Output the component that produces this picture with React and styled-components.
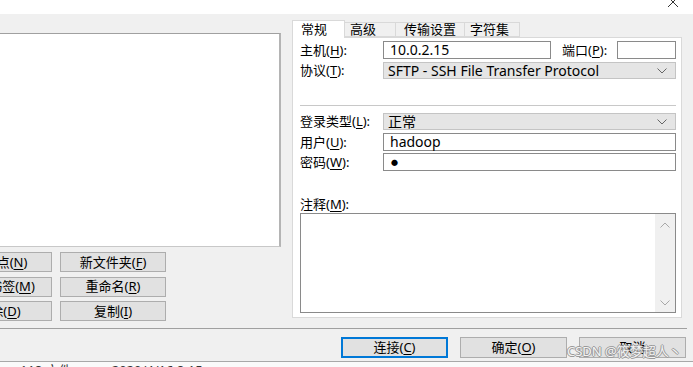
import React from "react";
import styled, { createGlobalStyle } from "styled-components";

const GlobalStyle = createGlobalStyle`
  html, body {
    margin: 0;
    padding: 0;
    width: 693px;
    height: 367px;
    overflow: hidden;
    background: #f0f0f0;
    font-family: "Noto Sans", "Noto Sans CJK SC", sans-serif;
    font-size: 13px;
    color: #000;
  }
  u { text-decoration-thickness: 1px; text-underline-offset: 2px; }
`;

const Window = styled.div`
  position: relative;
  width: 693px;
  height: 367px;
  overflow: hidden;
  display: flex;
  flex-direction: column;
`;

const TitleBar = styled.div`
  height: 14px;
  flex: none;
  background: #fff;
  display: flex;
  justify-content: flex-end;
  padding-right: 14px;
  overflow: hidden;
`;

const Main = styled.div`
  display: flex;
  align-items: flex-start;
  height: 304px;
  flex: none;
`;

const LeftPane = styled.div`
  margin-left: -60px;
  width: 341px;
  flex: none;
  display: flex;
  flex-direction: column;
`;

const ListBox = styled.div`
  margin-top: 19px;
  height: 214px;
  box-sizing: border-box;
  background: #fff;
  border-top: 1px solid #a0a0a0;
  border-right: 2px solid #b4b4b4;
  border-bottom: 1px solid #c8c8c8;
`;

const ButtonGrid = styled.div`
  margin-top: 5px;
  padding-left: 6px;
  display: grid;
  grid-template-columns: 106px 106px;
  grid-auto-rows: 20px;
  column-gap: 8px;
  row-gap: 4.5px;
`;

const Button = styled.div`
  box-sizing: border-box;
  width: ${p => p.$w || 106}px;
  height: ${p => p.$h || 20}px;
  background: #e1e1e1;
  border: 1px solid ${p => (p.$default ? "#0078d7" : "#adadad")};
  box-shadow: ${p => (p.$default ? "inset 0 0 0 1px #0078d7" : "none")};
  display: flex;
  align-items: center;
  justify-content: center;
  white-space: nowrap;
  font-size: 13px;
  line-height: 1;
`;

const RightPane = styled.div`
  margin-left: 11px;
  width: 390px;
  flex: none;
  display: flex;
  flex-direction: column;
`;

const TabBar = styled.div`
  margin-top: 6px;
  height: 17px;
  display: flex;
  align-items: flex-end;
  position: relative;
  z-index: 1;
`;

const Tab = styled.div`
  box-sizing: border-box;
  width: ${p => p.$w}px;
  height: ${p => (p.$active ? 18 : 15)}px;
  margin-bottom: ${p => (p.$active ? -1 : 0)}px;
  background: ${p => (p.$active ? "#fff" : "#f0f0f0")};
  border: 1px solid #d9d9d9;
  border-bottom: ${p => (p.$active ? "none" : "1px solid #d9d9d9")};
  border-left: ${p => (p.$first ? "1px solid #d9d9d9" : "none")};
  padding-left: ${p => p.$pad}px;
  display: flex;
  align-items: center;
  font-size: 13px;
  line-height: 1;
  white-space: nowrap;
`;

const TabPanel = styled.div`
  box-sizing: border-box;
  height: 281px;
  background: #fff;
  border: 1px solid #d9d9d9;
  padding: 0 5px 0 7px;
  display: flex;
  flex-direction: column;
`;

const Row = styled.div`
  display: flex;
  align-items: center;
  margin-top: ${p => p.$mt}px;
  height: ${p => p.$h || 18}px;
`;

const Label = styled.div`
  width: ${p => p.$w || 83}px;
  margin-left: ${p => p.$ml || 0}px;
  flex: none;
  white-space: nowrap;
  font-size: 13px;
  line-height: 1;
`;

const TextInput = styled.div`
  box-sizing: border-box;
  height: 100%;
  ${p => (p.$w ? `width: ${p.$w}px; flex: none;` : "flex: 1;")}
  border: 1px solid #8a8a8a;
  background: #fff;
  padding-left: 6px;
  display: flex;
  align-items: center;
  font-size: 14px;
  line-height: 1;
  white-space: nowrap;
`;

const Combo = styled.div`
  box-sizing: border-box;
  flex: 1;
  height: 100%;
  border: 1px solid #c4c4c4;
  background: #e5e5e5;
  padding: 0 8px 0 4px;
  display: flex;
  align-items: center;
  justify-content: space-between;
  font-size: 14px;
  line-height: 1;
  white-space: nowrap;
`;

const Dot = styled.span`
  font-size: 7px;
  margin-left: 1px;
`;

const Etched = styled.div`
  margin-top: ${p => p.$mt}px;
  height: 1px;
  margin-right: ${p => p.$mr || 0}px;
  background: ${p => p.$color || "#c8c8c8"};
  flex: none;
`;

const NoteLabel = styled.div`
  margin-top: 25px;
  height: 16px;
  display: flex;
  align-items: center;
  font-size: 13px;
  line-height: 1;
`;

const TextArea = styled.div`
  margin-top: 1px;
  box-sizing: border-box;
  width: 376px;
  height: 100px;
  border: 1px solid #8a8a8a;
  background: #fff;
  display: flex;
  justify-content: flex-end;
`;

const ScrollBar = styled.div`
  width: 20px;
  background: #f0f0f0;
  display: flex;
  flex-direction: column;
  justify-content: space-between;
  align-items: center;
  padding: 8px 0 6px;
`;

const Footer = styled.div`
  margin-top: 8px;
  display: flex;
  justify-content: flex-end;
  gap: 12px;
  padding-right: 7px;
`;

const StatusStrip = styled.div`
  margin-top: 3px;
  flex: 1;
  background: #fafafa;
  border-top: 1px solid #a8a8a8;
  display: flex;
  align-items: flex-start;
  overflow: hidden;
  font-size: 13px;
  line-height: 1;
  color: #333;
`;

const StatusText = styled.span`
  margin-left: ${p => p.$ml}px;
  margin-top: 2px;
  white-space: nowrap;
`;

const Watermark = styled.div`
  position: absolute;
  left: 567px;
  top: 343px;
  font-size: 13px;
  line-height: 16px;
  white-space: nowrap;
  color: rgba(255, 255, 255, 0.9);
  text-shadow:
    -1px 0 0 #9a9a9a,
    1px 0 0 #9a9a9a,
    0 -1px 0 #9a9a9a,
    0 1px 0 #9a9a9a;
`;

const Chevron = ({ up }) => (
  <svg width="10" height="6" viewBox="0 0 10 6">
    <path
      d={up ? "M0.5 5.5 L5 1 L9.5 5.5" : "M0.5 0.5 L5 5 L9.5 0.5"}
      fill="none"
      stroke={up ? "#a8a8a8" : "#666"}
      strokeWidth="1"
    />
  </svg>
);

const CloseIcon = () => (
  <svg width="12" height="14" viewBox="0 0 12 14">
    <path d="M1 -3 L11 7 M11 -3 L1 7" stroke="#333" strokeWidth="1" fill="none" />
  </svg>
);

const App = () => (
  <Window>
    <GlobalStyle />
    <TitleBar>
      <CloseIcon />
    </TitleBar>
    <Main>
      <LeftPane>
        <ListBox />
        <ButtonGrid>
          <Button>新站点(<u>N</u>)</Button>
          <Button>新文件夹(<u>F</u>)</Button>
          <Button>新建书签(<u>M</u>)</Button>
          <Button>重命名(<u>R</u>)</Button>
          <Button>删除(<u>D</u>)</Button>
          <Button>复制(<u>I</u>)</Button>
        </ButtonGrid>
      </LeftPane>
      <RightPane>
        <TabBar>
          <Tab $active $first $w={53} $pad={8}>常规</Tab>
          <Tab $w={51} $pad={5}>高级</Tab>
          <Tab $w={69} $pad={8}>传输设置</Tab>
          <Tab $w={55} $pad={5}>字符集</Tab>
        </TabBar>
        <TabPanel>
          <Row $mt={3}>
            <Label>主机(<u>H</u>):</Label>
            <TextInput>10.0.2.15</TextInput>
            <Label $w={55} $ml={11}>端口(<u>P</u>):</Label>
            <TextInput $w={59} />
          </Row>
          <Row $mt={3} $h={17}>
            <Label>协议(<u>T</u>):</Label>
            <Combo>
              SFTP - SSH File Transfer Protocol
              <Chevron />
            </Combo>
          </Row>
          <Etched $mt={26} />
          <Row $mt={7} $h={17}>
            <Label>登录类型(<u>L</u>):</Label>
            <Combo>
              正常
              <Chevron />
            </Combo>
          </Row>
          <Row $mt={3}>
            <Label>用户(<u>U</u>):</Label>
            <TextInput>hadoop</TextInput>
          </Row>
          <Row $mt={2}>
            <Label>密码(<u>W</u>):</Label>
            <TextInput><Dot>●</Dot></TextInput>
          </Row>
          <NoteLabel>注释(<u>M</u>):</NoteLabel>
          <TextArea>
            <ScrollBar>
              <Chevron up />
              <svg width="10" height="6" viewBox="0 0 10 6">
                <path d="M0.5 0.5 L5 5 L9.5 0.5" fill="none" stroke="#a8a8a8" strokeWidth="1" />
              </svg>
            </ScrollBar>
          </TextArea>
        </TabPanel>
      </RightPane>
    </Main>
    <Etched $mt={10} $mr={6} $color="#a0a0a0" />
    <Footer>
      <Button $w={107} $h={21} $default>连接(<u>C</u>)</Button>
      <Button $w={107} $h={21}>确定(<u>O</u>)</Button>
      <Button $w={107} $h={21}>取消</Button>
    </Footer>
    <StatusStrip>
      <StatusText $ml={20}>118 文件</StatusText>
      <StatusText $ml={40}>2020/4/16 8:15</StatusText>
    </StatusStrip>
    <Watermark>CSDN @筱梦超人丶</Watermark>
  </Window>
);

export default App;
